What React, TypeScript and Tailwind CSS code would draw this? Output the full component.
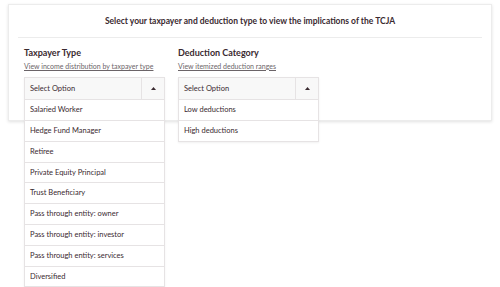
const taxpayers = [
  "Salaried Worker",
  "Hedge Fund Manager",
  "Retiree",
  "Private Equity Principal",
  "Trust Beneficiary",
  "Pass through entity: owner",
  "Pass through entity: investor",
  "Pass through entity: services",
  "Diversified",
];

const deductions = ["Low deductions", "High deductions"];

function Dropdown({ options }: { options: string[] }) {
  return (
    <div className="w-[141px] border border-[#e6e3e4] bg-white shadow-[0_1px_2px_rgba(0,0,0,0.06)]">
      <div className="flex h-[21px] bg-[#f8f8f8]">
        <span className="flex-1 pl-[5px] leading-[21px]">Select Option</span>
        <span className="flex w-[23px] items-center justify-center border-l border-[#e6e3e4]">
          <svg width="5" height="3" viewBox="0 0 5 3">
            <path d="M0 3 L2.5 0 L5 3 Z" fill="#3a2a30" />
          </svg>
        </span>
      </div>
      {options.map((o) => (
        <div
          key={o}
          className="h-[20.8px] border-t border-[#e6e3e4] pl-[5px] leading-[20px]"
        >
          {o}
        </div>
      ))}
    </div>
  );
}

export default function App() {
  return (
    <div className="h-[287px] w-[500px] overflow-hidden bg-white font-['Lato',sans-serif] text-[7.5px] text-[#3a2a30]">
      <div className="mx-[8px] mt-[4px] h-[117px] border border-[#ececec] bg-white shadow-[0_1px_3px_rgba(0,0,0,0.12)]">
        <div className="mx-[9px] border-b border-[#ececec] pb-[9px] pt-[10px] text-center text-[8.5px] font-bold">
          Select your taxpayer and deduction type to view the implications of the TCJA
        </div>
        <div className="flex gap-[13px] pl-[15px] pt-[9px]">
          <div className="flex flex-col">
            <h2 className="text-[9px] font-bold leading-[12px]">Taxpayer Type</h2>
            <a className="mt-[2px] text-[7px] text-[#6b6468] underline">
              View income distribution by taxpayer type
            </a>
            <div className="mt-[6px]">
              <Dropdown options={taxpayers} />
            </div>
          </div>
          <div className="flex flex-col">
            <h2 className="text-[9px] font-bold leading-[12px]">Deduction Category</h2>
            <a className="mt-[2px] text-[7px] text-[#6b6468] underline">
              View itemized deduction ranges
            </a>
            <div className="mt-[6px]">
              <Dropdown options={deductions} />
            </div>
          </div>
        </div>
      </div>
    </div>
  );
}
